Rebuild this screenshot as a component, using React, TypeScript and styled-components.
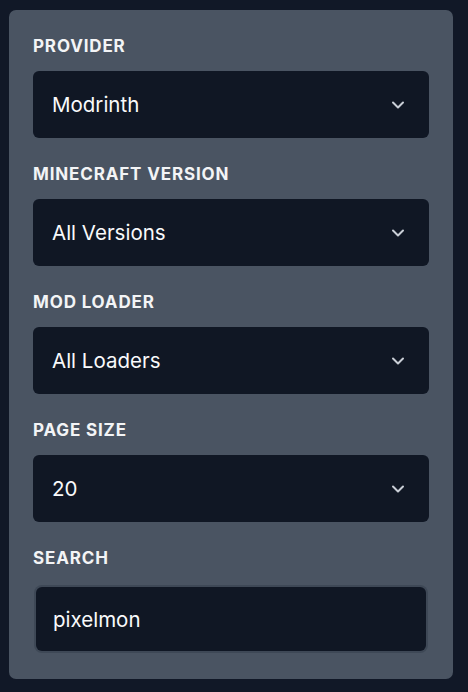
import styled, { createGlobalStyle } from "styled-components";

const GlobalStyle = createGlobalStyle`
  html, body {
    margin: 0;
    padding: 0;
    background: #111827;
  }
  body {
    font-family: Inter, "Noto Sans", "Liberation Sans", sans-serif;
    -webkit-font-smoothing: antialiased;
  }
  * {
    box-sizing: border-box;
  }
`;

type Option = { label: string; value: string };

const fields: { id: string; label: string; value: string; options: Option[] }[] = [
  {
    id: "provider",
    label: "Provider",
    value: "modrinth",
    options: [
      { label: "Modrinth", value: "modrinth" },
      { label: "CurseForge", value: "curseforge" },
    ],
  },
  {
    id: "version",
    label: "Minecraft Version",
    value: "all",
    options: [{ label: "All Versions", value: "all" }],
  },
  {
    id: "loader",
    label: "Mod Loader",
    value: "all",
    options: [{ label: "All Loaders", value: "all" }],
  },
  {
    id: "pageSize",
    label: "Page Size",
    value: "20",
    options: [
      { label: "10", value: "10" },
      { label: "20", value: "20" },
      { label: "50", value: "50" },
    ],
  },
];

export default function App() {
  return (
    <>
      <GlobalStyle />
      <Page>
        <Panel>
          {fields.map((field) => (
            <Field key={field.id}>
              <Label htmlFor={field.id}>{field.label}</Label>
              <SelectWrap>
                <Select id={field.id} defaultValue={field.value}>
                  {field.options.map((o) => (
                    <option key={o.value} value={o.value}>
                      {o.label}
                    </option>
                  ))}
                </Select>
                <Chevron width='14' height='9' viewBox='0 0 14 9' fill='none'>
                  <path
                    d='M2 2l5 5 5-5'
                    stroke='currentColor'
                    strokeWidth='2'
                    strokeLinecap='round'
                    strokeLinejoin='round'
                  />
                </Chevron>
              </SelectWrap>
            </Field>
          ))}
          <Field>
            <Label htmlFor='search'>Search</Label>
            <SearchInput id='search' type='text' defaultValue='pixelmon' />
          </Field>
        </Panel>
      </Page>
    </>
  );
}

const Page = styled.div`
  padding: 10px 15px 14px 9px;
  min-height: 692px;
`;

const Panel = styled.div`
  display: flex;
  flex-direction: column;
  gap: 24px;
  width: 444px;
  padding: 24px 24px 28px 24px;
  background: #4a5462;
  border-radius: 7px;
`;

const Field = styled.div`
  display: flex;
  flex-direction: column;
`;

const Label = styled.label`
  display: block;
  margin-bottom: 13px;
  font-size: 17px;
  line-height: 24px;
  font-weight: 700;
  letter-spacing: 0.05em;
  text-transform: uppercase;
  color: #f3f4f6;
`;

const SelectWrap = styled.div`
  position: relative;
`;

const Select = styled.select`
  appearance: none;
  display: block;
  width: 100%;
  height: 67px;
  padding: 0 48px 0 19px;
  border: none;
  border-radius: 6px;
  background: #101724;
  color: #f9fafb;
  font-family: inherit;
  font-size: 20.5px;
  outline: none;
`;

const Chevron = styled.svg`
  position: absolute;
  top: 50%;
  right: 24px;
  transform: translateY(-50%);
  color: #c9ced6;
  pointer-events: none;
`;

const SearchInput = styled.input`
  display: block;
  width: 390px;
  height: 64px;
  margin: 4px 0 0 3px;
  padding: 0 17px;
  border: none;
  border-radius: 6px;
  background: #101724;
  box-shadow: 0 0 0 2px #3e4856;
  color: #f9fafb;
  font-family: inherit;
  font-size: 20.5px;
  outline: none;
`;
